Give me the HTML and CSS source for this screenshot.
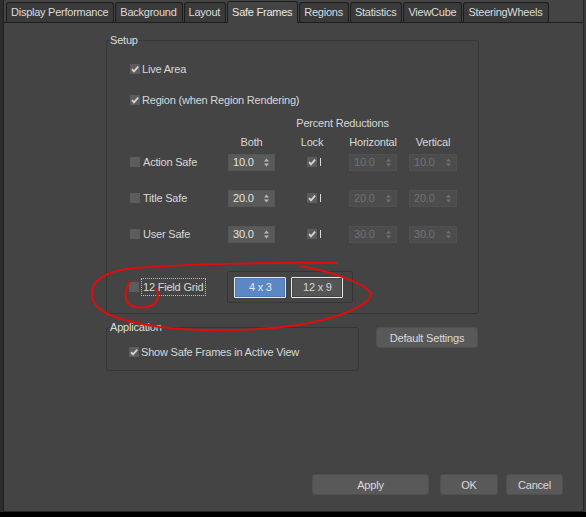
FILE: index.html
```html
<!DOCTYPE html>
<html>
<head>
<meta charset="utf-8">
<title>Safe Frames</title>
<link rel="stylesheet" href="styles.css">
</head>
<body>
<div class="app">
  <div class="lstrip"></div>
  <div class="dialog">
    <div class="tabs">
      <div class="tab">Display Performance</div>
      <div class="tab">Background</div>
      <div class="tab">Layout</div>
      <div class="tab active">Safe Frames</div>
      <div class="tab">Regions</div>
      <div class="tab">Statistics</div>
      <div class="tab">ViewCube</div>
      <div class="tab">SteeringWheels</div>
    </div>
    <div class="panel">
      <fieldset class="group setup">
        <legend>Setup</legend>
        <div class="row live"><span class="cb checked"><svg viewBox="0 0 10 10"><path d="M2 5.2 L4 7.4 L8.2 2.6" /></svg></span><span>Live Area</span></div>
        <div class="row region"><span class="cb checked"><svg viewBox="0 0 10 10"><path d="M2 5.2 L4 7.4 L8.2 2.6" /></svg></span><span>Region (when Region Rendering)</span></div>
        <div class="table">
          <div class="pr">Percent Reductions</div>
          <div class="hd"></div>
          <div class="hd">Both</div>
          <div class="hd">Lock</div>
          <div class="hd">Horizontal</div>
          <div class="hd"></div>
          <div class="hd">Vertical</div>

          <div class="lbl"><span class="cb"></span><span>Action Safe</span></div>
          <div class="cell"><span class="spin"><span>10.0</span><svg viewBox="0 0 5 9"><path d="M2.5 0.5 L5 3.5 L0 3.5Z M2.5 8.5 L5 5.5 L0 5.5Z"/></svg></span></div>
          <div class="cell lock"><span class="cb checked"><svg viewBox="0 0 10 10"><path d="M2 5.2 L4 7.4 L8.2 2.6" /></svg></span><span class="bar"></span></div>
          <div class="cell"><span class="spin off"><span>10.0</span><svg viewBox="0 0 5 9"><path d="M2.5 0.5 L5 3.5 L0 3.5Z M2.5 8.5 L5 5.5 L0 5.5Z"/></svg></span></div>
          <div></div>
          <div class="cell"><span class="spin off"><span>10.0</span><svg viewBox="0 0 5 9"><path d="M2.5 0.5 L5 3.5 L0 3.5Z M2.5 8.5 L5 5.5 L0 5.5Z"/></svg></span></div>

          <div class="lbl"><span class="cb"></span><span>Title Safe</span></div>
          <div class="cell"><span class="spin"><span>20.0</span><svg viewBox="0 0 5 9"><path d="M2.5 0.5 L5 3.5 L0 3.5Z M2.5 8.5 L5 5.5 L0 5.5Z"/></svg></span></div>
          <div class="cell lock"><span class="cb checked"><svg viewBox="0 0 10 10"><path d="M2 5.2 L4 7.4 L8.2 2.6" /></svg></span><span class="bar"></span></div>
          <div class="cell"><span class="spin off"><span>20.0</span><svg viewBox="0 0 5 9"><path d="M2.5 0.5 L5 3.5 L0 3.5Z M2.5 8.5 L5 5.5 L0 5.5Z"/></svg></span></div>
          <div></div>
          <div class="cell"><span class="spin off"><span>20.0</span><svg viewBox="0 0 5 9"><path d="M2.5 0.5 L5 3.5 L0 3.5Z M2.5 8.5 L5 5.5 L0 5.5Z"/></svg></span></div>

          <div class="lbl"><span class="cb"></span><span>User Safe</span></div>
          <div class="cell"><span class="spin"><span>30.0</span><svg viewBox="0 0 5 9"><path d="M2.5 0.5 L5 3.5 L0 3.5Z M2.5 8.5 L5 5.5 L0 5.5Z"/></svg></span></div>
          <div class="cell lock"><span class="cb checked"><svg viewBox="0 0 10 10"><path d="M2 5.2 L4 7.4 L8.2 2.6" /></svg></span><span class="bar"></span></div>
          <div class="cell"><span class="spin off"><span>30.0</span><svg viewBox="0 0 5 9"><path d="M2.5 0.5 L5 3.5 L0 3.5Z M2.5 8.5 L5 5.5 L0 5.5Z"/></svg></span></div>
          <div></div>
          <div class="cell"><span class="spin off"><span>30.0</span><svg viewBox="0 0 5 9"><path d="M2.5 0.5 L5 3.5 L0 3.5Z M2.5 8.5 L5 5.5 L0 5.5Z"/></svg></span></div>
        </div>
        <div class="gridrow">
          <span class="cb"></span>
          <span class="focus">12 Field Grid</span>
          <div class="subbox">
            <span class="seg active">4 x 3</span>
            <span class="seg">12 x 9</span>
          </div>
        </div>
      </fieldset>
      <div class="approw">
        <fieldset class="group application">
          <legend>Application</legend>
          <div class="row show"><span class="cb checked"><svg viewBox="0 0 10 10"><path d="M2 5.2 L4 7.4 L8.2 2.6" /></svg></span><span>Show Safe Frames in Active View</span></div>
        </fieldset>
        <span class="btn default">Default Settings</span>
      </div>
      <div class="footer">
        <span class="btn apply">Apply</span>
        <span class="btn ok">OK</span>
        <span class="btn cancel">Cancel</span>
      </div>
    </div>
  </div>
  <div class="rstrip"></div>
</div>
<svg class="annot" viewBox="0 0 586 517" width="586" height="517">
  <path d="M337 263 C 280 262 185 264 135 268 C 104 271 91 281 92 295 C 93 310 112 320 160 327 C 210 333 285 331 330 318 C 358 310 374 299 370 292 C 364 284 338 273 300 266" />
  <path d="M130 282 C 124 290 124 301 130 305 C 138 309 150 308 155 303 C 159 298 159 293 156 289" />
</svg>
</body>
</html>
```

FILE: styles.css
```css
* { box-sizing: border-box; }
html, body { margin: 0; padding: 0; }
body {
  background: #000;
  width: 586px;
  height: 517px;
  overflow: hidden;
  font-family: "Liberation Sans", Arial, sans-serif;
  font-size: 11px;
  letter-spacing: -0.2px;
  color: #d8d8d8;
  position: relative;
}
.app {
  display: flex;
  height: 512px;
}
.lstrip { width: 3px; background: #2d2d2d; }
.rstrip { width: 2px; background: #3a3a3a; }
.dialog {
  width: 581px;
  background: #444444;
  border-left: 1px solid #1f1f1f;
  border-right: 1px solid #262626;
  border-bottom: 1px solid #262626;
  display: flex;
  flex-direction: column;
}
.tabs {
  height: 23px;
  display: flex;
  align-items: flex-end;
  gap: 1px;
  padding-left: 2px;
  border-bottom: 1px solid #1e1e1e;
}
.tab {
  height: 20px;
  line-height: 18px;
  padding: 0 5px 0 4px;
  background: #3a3a3a;
  border: 1px solid #1d1d1d;
  border-bottom: none;
  border-radius: 3px 3px 0 0;
  color: #dcdcdc;
  white-space: nowrap;
  letter-spacing: -0.25px;
}
.tab.active {
  background: #444444;
  height: 22px;
  margin-bottom: -1px;
  line-height: 20px;
  color: #e8e8e8;
}
.panel {
  flex: 1;
  display: flex;
  flex-direction: column;
  padding-left: 102px;
}
.group {
  margin: 0;
  border: 1px solid #363636;
  border-radius: 3px;
  min-width: 0;
}
.group legend {
  padding: 0;
  line-height: 14px;
  color: #dcdcdc;
}
.setup {
  margin-top: 10px;
  width: 373px;
  padding: 0 0 10px 23px;
}
.setup legend { margin-left: -20px; }
.row {
  display: flex;
  align-items: center;
  height: 20px;
  gap: 2px;
}
.live { margin-top: 12px; }
.region { margin-top: 11px; }
.cb {
  width: 10px;
  height: 10px;
  background: #5c5c5c;
  display: inline-flex;
  flex: none;
}
.cb svg { width: 10px; height: 10px; }
.cb svg path { fill: none; stroke: #d4d4d4; stroke-width: 1.8; }
.table {
  margin-top: 4px;
  display: grid;
  grid-template-columns: 98px 47px 74px 48px 12px 48px;
  grid-template-rows: 18px 20px 20px 52px 20px;
  align-items: center;
}
.pr {
  grid-column: 2 / 7;
  text-align: center;
}
.hd { text-align: center; }
.lbl {
  display: flex;
  align-items: center;
  gap: 3px;
}
.cell { display: flex; align-items: center; }
.spin {
  width: 47px;
  height: 17px;
  background: #5a5a5a;
  color: #e2e2e2;
  display: flex;
  align-items: center;
  justify-content: space-between;
  padding: 0 5px 0 4px;
  border: 1px solid #555;
}
.spin svg { width: 5px; height: 9px; }
.spin svg path { fill: #b8b8b8; }
.spin.off { width: 48px; background: #4c4c4c; color: #727272; border-color: #505050; }
.spin.off svg path { fill: #707070; }
.lock { padding-left: 32px; gap: 3px; }
.bar { width: 1px; height: 8px; background: #dadada; }
.gridrow {
  margin-top: 27px;
  display: flex;
  align-items: center;
  height: 32px;
}
.gridrow .cb { margin-left: -1px; }
.focus {
  margin-left: 2px;
  border: 1px dotted #bdbdbd;
  padding: 1px 2px 1px 1px;
  line-height: 14px;
  white-space: nowrap;
}
.subbox {
  margin-left: 21px;
  width: 126px;
  height: 32px;
  border: 1px solid #363636;
  border-radius: 2px;
  display: flex;
  align-items: center;
  gap: 5px;
  padding-left: 6px;
}
.seg {
  width: 52px;
  height: 21px;
  border: 1px solid #e8e8e8;
  background: #555;
  color: #d6d6d6;
  display: flex;
  align-items: center;
  justify-content: center;
  box-shadow: inset 0 0 0 1px #444;
  border-radius: 1px;
}
.seg.active { background: #5b87c5; color: #e4e8f0; box-shadow: inset 0 0 0 1px #4c78b6; }
.approw {
  display: flex;
  align-items: flex-start;
  margin-top: 6px;
}
.application {
  width: 253px;
  padding: 0 0 8px 22px;
}
.application legend { margin-left: -19px; }
.show { margin-top: 8px; }
.btn {
  display: flex;
  align-items: center;
  justify-content: center;
  background: #595959;
  border: 1px solid #4f4f4f;
  border-radius: 3px;
  color: #dadada;
  height: 21px;
}
.default {
  margin-left: 17px;
  margin-top: 7px;
  width: 102px;
}
.footer {
  margin-top: auto;
  display: flex;
  justify-content: flex-end;
  padding: 0 20px 16px 0;
}
.apply { width: 117px; }
.ok { width: 58px; margin-left: 11px; }
.cancel { width: 57px; margin-left: 8px; }
.annot {
  position: absolute;
  left: 0;
  top: 0;
  pointer-events: none;
}
.annot path {
  fill: none;
  stroke: #e00d0d;
  stroke-width: 2;
  stroke-linecap: round;
}
```
